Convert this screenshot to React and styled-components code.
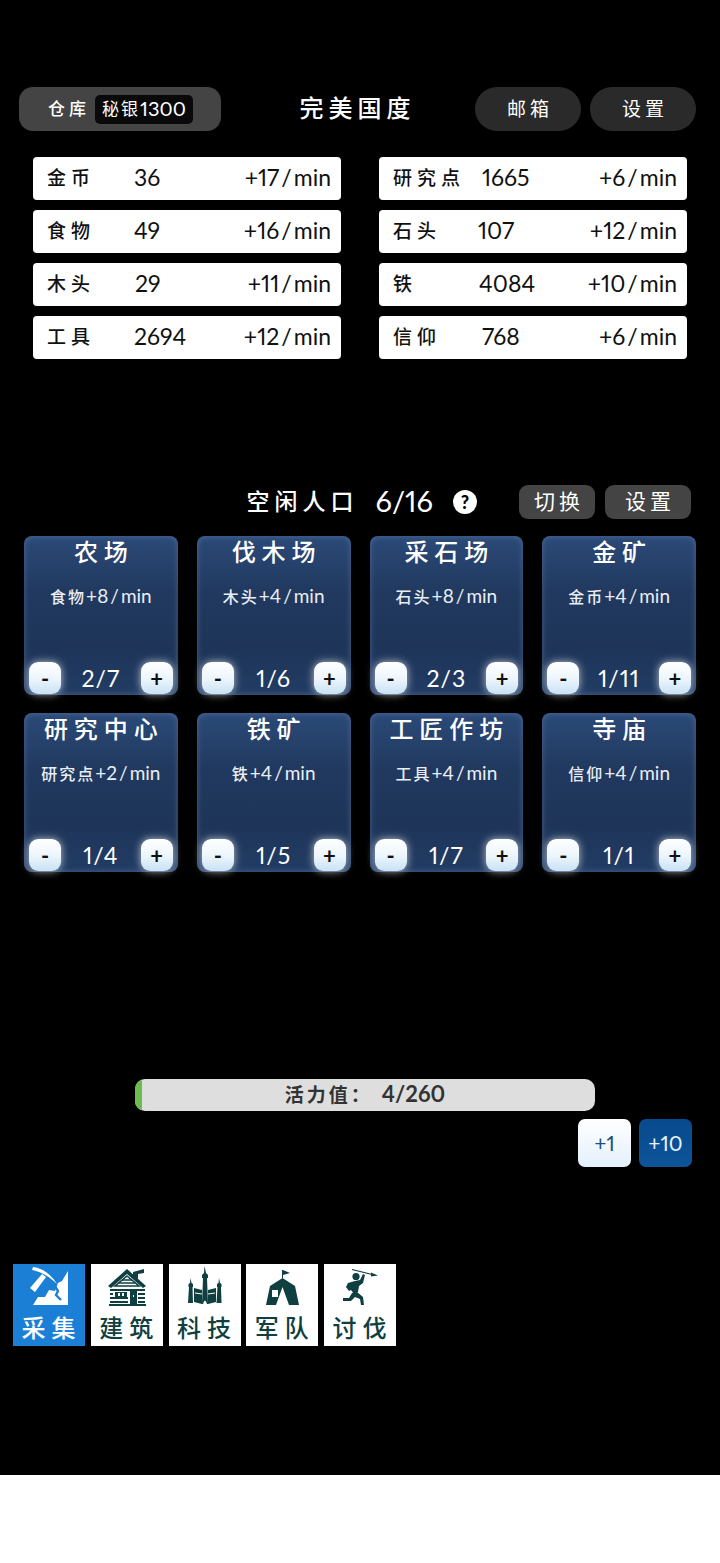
import React from 'react';
import styled, {createGlobalStyle} from 'styled-components';

const GlobalStyle = createGlobalStyle`
  html, body {
    margin: 0;
    padding: 0;
    background: #fff;
  }
  * {
    box-sizing: border-box;
  }
`;

const FONT = `Lato, "Noto Sans CJK SC", sans-serif`;

const Page = styled.div`
  height: 1475px;
  width: 720px;
  padding-top: 87px;
  background: #000;
  color: #fff;
  font-family: ${FONT};
  font-feature-settings: "pnum";
`;

const Header = styled.div`
  display: flex;
  align-items: center;
  height: 44px;
  padding: 0 24px 0 19px;
`;

const StorePill = styled.div`
  display: flex;
  align-items: center;
  width: 202px;
  height: 44px;
  padding-left: 29px;
  border-radius: 14px;
  background: #444;
`;

const StoreLabel = styled.span`
  font-size: 17px;
  letter-spacing: 4px;
  margin-right: 5px;
  padding-bottom: 3px;
  font-weight: 500;
`;

const SilverBox = styled.span`
  display: flex;
  align-items: center;
  justify-content: center;
  width: 98px;
  height: 29px;
  padding-bottom: 3px;
  border-radius: 5px;
  background: #090909;
  font-size: 20px;
  white-space: nowrap;
`;

const SilverName = styled.span`
  font-size: 17px;
  letter-spacing: 2px;
`;

const Title = styled.div`
  flex: 1;
  padding: 0 0 6px 19px;
  text-align: center;
  font-size: 24px;
  letter-spacing: 5px;
  font-weight: 500;
`;

const RoundButton = styled.div`
  display: flex;
  align-items: center;
  justify-content: center;
  width: 106px;
  height: 44px;
  padding: 0 0 4px 4px;
  margin-left: ${p => p.$gap || 0}px;
  border-radius: 22px;
  background: #2a2a2a;
  font-size: 19px;
  letter-spacing: 4px;
`;

const ResourceGrid = styled.div`
  display: grid;
  grid-template-columns: 308px 308px;
  column-gap: 38px;
  row-gap: 10px;
  margin-top: 26px;
  padding-left: 33px;
`;

const ResourceRow = styled.div`
  display: flex;
  align-items: center;
  height: 43px;
  padding: 0 10px 4px 14px;
  border-radius: 4px;
  background: #fff;
  color: #111;
  font-size: 23px;
`;

const ResourceName = styled.span`
  width: ${p => p.$w}px;
  font-size: 19px;
  letter-spacing: 5px;
  font-weight: 500;
  white-space: nowrap;
`;

const ResourceValue = styled.span`
  flex: 1;
  padding-left: ${p => p.$nudge || 0}px;
`;

const RateText = styled.span`
  white-space: nowrap;
`;

const Slash = styled.span`
  margin: 0 2px;
`;

const IdleBar = styled.div`
  display: flex;
  align-items: center;
  justify-content: flex-end;
  height: 34px;
  margin-top: 126px;
  padding-right: 29px;
`;

const IdleLabel = styled.span`
  padding-bottom: 5px;
  font-size: 23px;
  letter-spacing: 5px;
  font-weight: 500;
  margin-right: 17px;
`;

const IdleCount = styled.span`
  padding-bottom: 4px;
  font-size: 29px;
  margin-right: 20px;
`;

const Help = styled.span`
  display: flex;
  align-items: center;
  justify-content: center;
  width: 24px;
  height: 24px;
  margin-right: 42px;
  border-radius: 50%;
  background: #fff;
  color: #000;
  font-size: 18px;
  font-weight: 900;
`;

const SmallButton = styled.div`
  display: flex;
  align-items: center;
  justify-content: center;
  width: ${p => p.$w}px;
  height: 34px;
  padding: 0 0 4px 4px;
  margin-left: ${p => p.$gap || 0}px;
  border-radius: 9px;
  background: #444;
  font-size: 21px;
  letter-spacing: 4px;
`;

const CardGrid = styled.div`
  display: grid;
  grid-template-columns: repeat(4, 1fr);
  column-gap: 19px;
  row-gap: 18px;
  margin-top: 17px;
  padding: 0 24px;
`;

const Card = styled.div`
  display: flex;
  flex-direction: column;
  height: 159px;
  padding: 2px 5px 1px;
  border-radius: 8px;
  background: linear-gradient(180deg, #2b4a78 0%, #21395f 35%, #1e3559 70%, #223c64 100%);
  box-shadow: inset 0 0 6px rgba(120, 150, 195, 0.45);
`;

const CardTitle = styled.div`
  padding-left: 6px;
  text-align: center;
  font-size: 24px;
  line-height: 28px;
  letter-spacing: 6px;
  font-weight: 500;
  white-space: nowrap;
`;

const CardRate = styled.div`
  margin-top: 18px;
  text-align: center;
  font-size: 19px;
  line-height: 24px;
  white-space: nowrap;
  color: #e9eef5;
`;

const CardRateName = styled.span`
  font-size: 16px;
  letter-spacing: 2px;
  font-weight: 500;
`;

const Stepper = styled.div`
  display: flex;
  align-items: center;
  justify-content: space-between;
  margin-top: auto;
`;

const StepButton = styled.div`
  display: flex;
  align-items: center;
  justify-content: center;
  width: 32px;
  height: 32px;
  border-radius: 9px;
  background: linear-gradient(180deg, #ffffff 0%, #eef6fc 50%, #c9e2f5 100%);
  box-shadow: 0 0 8px rgba(255, 255, 255, 0.7);
  color: #111;
  font-size: 22px;
  font-weight: 700;
`;

const StepCount = styled.span`
  font-size: 23px;
  letter-spacing: 1px;
`;

const EnergyTrack = styled.div`
  position: relative;
  display: flex;
  align-items: center;
  justify-content: center;
  width: 460px;
  height: 32px;
  margin: 207px 0 0 135px;
  padding-bottom: 3px;
  border-radius: 10px;
  background: #dedede;
  overflow: hidden;
  color: #333;
  font-weight: 700;
  font-size: 22px;
`;

const EnergyFill = styled.div`
  position: absolute;
  left: 0;
  top: 0;
  bottom: 0;
  background: #6cbb4e;
  border-radius: 3px;
`;

const EnergyName = styled.span`
  font-size: 19px;
  letter-spacing: 3px;
  margin-right: 9px;
`;

const BoostRow = styled.div`
  display: flex;
  justify-content: flex-end;
  gap: 8px;
  margin-top: 8px;
  padding-right: 28px;
`;

const BoostButton = styled.div`
  display: flex;
  align-items: center;
  justify-content: center;
  width: 53px;
  height: 48px;
  padding-bottom: 2px;
  border-radius: 7px;
  font-size: 21px;
  background: ${p => p.$primary
    ? 'linear-gradient(180deg, #084a8e 0%, #0d5498 100%)'
    : 'linear-gradient(180deg, #ffffff 0%, #e4f0fb 100%)'};
  color: ${p => p.$primary ? '#e6f2ff' : '#1d4f80'};
`;

const NavBar = styled.div`
  display: flex;
  gap: 5.75px;
  margin-top: 97px;
  padding-left: 13px;
`;

const NavTile = styled.div`
  display: flex;
  flex-direction: column;
  align-items: center;
  width: 72px;
  height: 82px;
  background: ${p => p.$active ? '#1c7fd6' : '#fff'};
  color: ${p => p.$active ? '#fff' : '#0f3f40'};
`;

const NavIcon = styled.svg`
  display: block;
  width: 60px;
  height: 45px;
  fill: currentColor;
  stroke: none;
`;

const NavLabel = styled.span`
  margin-top: 1px;
  padding-left: 5px;
  font-size: 24px;
  line-height: 36px;
  letter-spacing: 6px;
  font-weight: 500;
  white-space: nowrap;
`;

const MineIcon = () => (
  <NavIcon viewBox="-1 0 60 45">
    <path d="M13 41 L18 33 L25 33 L29 26 L35 27 L38 19 L42 17 L48 7 L48 41 Z" />
    <path d="M33 19 L38 27 L36 31 L41 36" fill="none" stroke="#1c7fd6" strokeWidth="2.4" />
    <path d="M13 3 C22 4 31 10 37 20 C30 13 22 8 12 6 Z" />
    <path d="M22 10 L26 13 L15 28 L10 24 Z" />
  </NavIcon>
);

const CabinIcon = () => (
  <NavIcon viewBox="-3 0 60 45">
    <path d="M33 8 L44 5 L44 9 L38 10 L38 15 L33 12 Z" />
    <path d="M27 5 L46 22 L43 24 L27 10 L11 24 L8 22 Z" />
    <path d="M27 12 L39 22 L15 22 Z" fill="none" stroke="currentColor" strokeWidth="1.6" />
    <path d="M19 19 H35 M22 16 H32" stroke="currentColor" strokeWidth="1.3" fill="none" />
    <path d="M10 25 H45 V27 H10 Z M10 29 H13 V31 H10 Z M10 33 H28 V35 H10 Z M10 37 H28 V39 H10 Z M9 40 H46 V42 H9 Z M38 29 H45 V31 H38 Z M38 33 H45 V35 H38 Z M38 37 H45 V39 H38 Z" />
    <path d="M15 28 H27 V33 H15 Z M30 27 H37 V40 H30 Z" />
    <path d="M18 29 H20 V32 H18 Z M22 29 H24 V32 H22 Z M33 31 H34 V33 H33 Z" fill="#fff" />
  </NavIcon>
);

const CastleIcon = () => (
  <NavIcon viewBox="0 0 60 45">
    <path d="M29.5 2 L31 9 L33 11 L33 14 L32 14 L33 40 L27 40 L28 14 L27 14 L27 11 L29 9 Z" />
    <path d="M15.5 14 L16.5 19 L18 20 L18 23 L17.5 23 L18 39 L13 39 L14 23 L13.5 23 L13.5 20 L15 19 Z" />
    <path d="M44 14 L45 19 L46.5 20 L46.5 23 L46 23 L46.5 39 L41.5 39 L42.5 23 L42 23 L42 20 L43.5 19 Z" />
    <path d="M19 24 L27 26 L27 40 L19 38 Z M33 26 L41 24 L41 38 L33 40 Z" />
    <path d="M20 29 L27 30 M33 30 L40 29" stroke="#fff" strokeWidth="1" fill="none" />
    <path d="M28 40 Q30 33 32 40 Z" fill="#fff" />
  </NavIcon>
);

const TentIcon = () => (
  <NavIcon viewBox="0 0 60 45">
    <path d="M30 6 H31 V14 H30 Z M31 6 L38 9 L31 11 Z" />
    <path d="M30.5 14 L43 22 L47 41 L37 41 L30.5 23 L24 41 L14 41 L18 22 Z" />
    <path d="M20 26 H26 V33 H20 Z" fill="#fff" />
  </NavIcon>
);

const WarriorIcon = () => (
  <NavIcon viewBox="0 0 60 45">
    <path d="M22 5.5 L42 10.5" stroke="currentColor" strokeWidth="1.2" fill="none" />
    <path d="M41 8.5 L48 11.5 L41 12.5 Z" />
    <circle cx="26" cy="12.5" r="3.6" />
    <path d="M18 19 L25 17 L30 16 L33 10 L35 11 L33 19 L29 22 L28 28 L24 30 L21 26 L19 27 L16 23 Z" />
    <path d="M22 29 L27 28 L33 33 L34 41 L31 41 L30 35 L25 33 L21 37 L13 37 L13 34 L19 34 Z" />
  </NavIcon>
);

const LEFT_RESOURCES = [
  {name: '金币', value: 36, rate: 17, w: 87},
  {name: '食物', value: 49, rate: 16, w: 87},
  {name: '木头', value: 29, rate: 11, w: 87, nudge: 1},
  {name: '工具', value: 2694, rate: 12, w: 87},
];

const RIGHT_RESOURCES = [
  {name: '研究点', value: 1665, rate: 6, w: 85, nudge: 4},
  {name: '石头', value: 107, rate: 12, w: 85},
  {name: '铁', value: 4084, rate: 10, w: 85, nudge: 1},
  {name: '信仰', value: 768, rate: 6, w: 85, nudge: 4},
];

const BUILDINGS = [
  {title: '农场', res: '食物', rate: 8, count: '2/7'},
  {title: '伐木场', res: '木头', rate: 4, count: '1/6'},
  {title: '采石场', res: '石头', rate: 8, count: '2/3'},
  {title: '金矿', res: '金币', rate: 4, count: '1/11'},
  {title: '研究中心', res: '研究点', rate: 2, count: '1/4'},
  {title: '铁矿', res: '铁', rate: 4, count: '1/5'},
  {title: '工匠作坊', res: '工具', rate: 4, count: '1/7'},
  {title: '寺庙', res: '信仰', rate: 4, count: '1/1'},
];

const NAV = [
  {label: '采集', Icon: MineIcon, active: true},
  {label: '建筑', Icon: CabinIcon},
  {label: '科技', Icon: CastleIcon},
  {label: '军队', Icon: TentIcon},
  {label: '讨伐', Icon: WarriorIcon},
];

const Rate = ({value}) => (
  <RateText>+{value}<Slash>/</Slash>min</RateText>
);

const Resource = ({name, value, rate, w, nudge}) => (
  <ResourceRow>
    <ResourceName $w={w}>{name}</ResourceName>
    <ResourceValue $nudge={nudge}>{value}</ResourceValue>
    <Rate value={rate}/>
  </ResourceRow>
);

const App = () => {
  const energy = 4;
  const energyMax = 260;

  return (
    <Page>
      <GlobalStyle/>
      <Header>
        <StorePill>
          <StoreLabel>仓库</StoreLabel>
          <SilverBox><SilverName>秘银</SilverName>1300</SilverBox>
        </StorePill>
        <Title>完美国度</Title>
        <RoundButton>邮箱</RoundButton>
        <RoundButton $gap={9}>设置</RoundButton>
      </Header>

      <ResourceGrid>
        {LEFT_RESOURCES.map((r, i) => (
          <React.Fragment key={r.name}>
            <Resource {...r}/>
            <Resource {...RIGHT_RESOURCES[i]}/>
          </React.Fragment>
        ))}
      </ResourceGrid>

      <IdleBar>
        <IdleLabel>空闲人口</IdleLabel>
        <IdleCount>6/16</IdleCount>
        <Help>?</Help>
        <SmallButton $w={76}>切换</SmallButton>
        <SmallButton $w={86} $gap={10}>设置</SmallButton>
      </IdleBar>

      <CardGrid>
        {BUILDINGS.map(b => (
          <Card key={b.title}>
            <CardTitle>{b.title}</CardTitle>
            <CardRate><CardRateName>{b.res}</CardRateName><Rate value={b.rate}/></CardRate>
            <Stepper>
              <StepButton>-</StepButton>
              <StepCount>{b.count}</StepCount>
              <StepButton>+</StepButton>
            </Stepper>
          </Card>
        ))}
      </CardGrid>

      <EnergyTrack>
        <EnergyFill style={{width: `${Math.max(6, (energy / energyMax) * 460)}px`}}/>
        <EnergyName>活力值：</EnergyName>
        {energy}/{energyMax}
      </EnergyTrack>

      <BoostRow>
        <BoostButton>+1</BoostButton>
        <BoostButton $primary>+10</BoostButton>
      </BoostRow>

      <NavBar>
        {NAV.map(({label, Icon, active}) => (
          <NavTile key={label} $active={active}>
            <Icon/>
            <NavLabel>{label}</NavLabel>
          </NavTile>
        ))}
      </NavBar>
    </Page>
  );
};

export default App;
